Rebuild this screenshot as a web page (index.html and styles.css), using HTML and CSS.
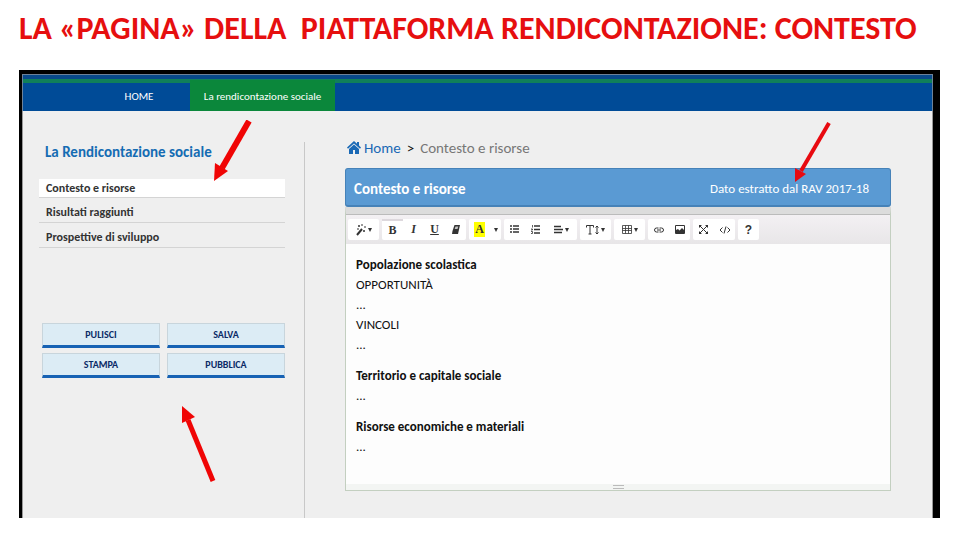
FILE: index.html
```html
<!DOCTYPE html>
<html lang="it">
  <head>
    <meta charset="utf-8">
    <title>La rendicontazione sociale</title>
    <meta name="viewport" content="width=device-width, initial-scale=1">
    <link rel="stylesheet" href="styles.css">
  </head>
  <body>
    <h1 class="title">LA «PAGINA» DELLA&nbsp; PIATTAFORMA RENDICONTAZIONE: CONTESTO</h1>
    <div class="frame">
      <header>
        <nav class="nav">
          <a href="#" class="nav-link">HOME</a>
          <a href="#" class="nav-link active">La rendicontazione sociale</a>
        </nav>
      </header>
      <div class="content">
        <aside class="sidebar">
          <h2 class="sidebar-title">La Rendicontazione sociale</h2>
          <ul class="menu">
            <li><a href="#" class="menu-link active">Contesto e risorse</a></li>
            <li><a href="#" class="menu-link">Risultati raggiunti</a></li>
            <li><a href="#" class="menu-link">Prospettive di sviluppo</a></li>
          </ul>
          <div class="actions">
            <button type="button" class="action">PULISCI</button>
            <button type="button" class="action">SALVA</button>
            <button type="button" class="action">STAMPA</button>
            <button type="button" class="action">PUBBLICA</button>
          </div>
        </aside>
        <main>
          <div class="breadcrumb">
            <a href="#" class="home-link">
              <svg width="14" height="13" viewBox="0 0 14 13"><path d="M7 0 0 6.500l1 1.200L7 2.500l6 5.200 1-1.200-2-1.900V1h-2v1.700zM2 8v5h4V9h2v4h4V8L7 3.600z" fill="currentColor"/></svg>
              Home
            </a>
            <span class="separator">&gt;</span>
            <span>Contesto e risorse</span>
          </div>
          <div class="panel-heading">
            <h3 class="panel-title">Contesto e risorse</h3>
            <span class="panel-note">Dato estratto dal RAV 2017-18</span>
          </div>
          <div class="editor">
            <div class="toolbar">
              <div class="group">
                <button type="button" class="tool wide" aria-label="Stile">
                  <svg width="10" height="12" viewBox="0 0 10 12"><path d="M1 11 6 5" stroke="currentColor" stroke-width="2"/><path d="M3 1v2M2 2h2M6 0v2M8 3h2M8 6v2M7 7h2M1 5h2" stroke="currentColor"/></svg>
                  <i class="caret"></i>
                </button>
              </div>
              <div class="group">
                <button type="button" class="tool pressed"><b>B</b></button>
                <button type="button" class="tool"><b><i>I</i></b></button>
                <button type="button" class="tool"><b><u>U</u></b></button>
                <button type="button" class="tool" aria-label="Rimuovi formato">
                  <svg width="8" height="9" viewBox="0 0 8 9"><path d="M2.500 0H8L6 9H0l.5-3z" fill="currentColor"/><path d="M3.500 1.500h2.800L5.500 4H2.700z" fill="#fff" opacity=".7"/></svg>
                </button>
              </div>
              <div class="group">
                <button type="button" class="tool"><b class="mark">A</b></button>
                <button type="button" class="tool narrow" aria-label="Altri colori"><i class="caret"></i></button>
              </div>
              <div class="group">
                <button type="button" class="tool" aria-label="Elenco puntato">
                  <svg width="9" height="9" viewBox="0 0 9 9"><path d="M0 1h2M0 4h2M0 7h2M3 1h6M3 4h6M3 7h6" stroke="currentColor" stroke-width="1.6"/></svg>
                </button>
                <button type="button" class="tool" aria-label="Elenco numerato">
                  <svg width="9" height="9" viewBox="0 0 9 9"><path d="M3 1h6M3 4.5h6M3 8h6" stroke="currentColor" stroke-width="1.4"/><path d="M1.5 0v2.5M0 4h1.5v1H0M0 6.500h1.500v2H0" fill="none" stroke="currentColor" stroke-width=".8"/></svg>
                </button>
                <button type="button" class="tool wide" aria-label="Paragrafo">
                  <svg width="9" height="9" viewBox="0 0 9 9"><path d="M0 1.500h7M0 4.500h9M0 7.500h8" stroke="currentColor" stroke-width="1.500"/></svg>
                  <i class="caret"></i>
                </button>
              </div>
              <div class="group">
                <button type="button" class="tool wide" aria-label="Altezza riga">
                  <svg width="13" height="10" viewBox="0 0 13 10"><path d="M.5 2.500v-2h7v2M4 .5v8.500M2.500 9h3M11 1v8M9.500 2.500 11 1l1.500 1.500M9.500 7.500 11 9l1.500-1.500" fill="none" stroke="currentColor"/></svg>
                  <i class="caret"></i>
                </button>
              </div>
              <div class="group">
                <button type="button" class="tool wide" aria-label="Tabella">
                  <svg width="10" height="9" viewBox="0 0 10 9"><path d="M.5.5h9v8h-9zM.5 3.500h9M.5 5.500h9M3.500.5v8M6.500.5v8" fill="none" stroke="currentColor" stroke-width=".8"/></svg>
                  <i class="caret"></i>
                </button>
              </div>
              <div class="group">
                <button type="button" class="tool" aria-label="Collegamento">
                  <svg width="10" height="6" viewBox="0 0 10 6"><path d="M4.500 5H2.500a2 2 0 0 1 0-4h2M5.500 1h2a2 2 0 0 1 0 4h-2M3 3h4" fill="none" stroke="currentColor"/></svg>
                </button>
                <button type="button" class="tool" aria-label="Immagine">
                  <svg width="10" height="9" viewBox="0 0 10 9"><path d="M.5.5h9v8h-9z" fill="none" stroke="currentColor"/><path d="M1 8V5l2-1 1.500 1.500L7 3l2 2v3z" fill="currentColor"/></svg>
                </button>
              </div>
              <div class="group">
                <button type="button" class="tool" aria-label="Schermo intero">
                  <svg width="9" height="9" viewBox="0 0 9 9"><path d="M1 1l7 7M8 1 1 8" stroke="currentColor"/><path d="M0 0h3L0 3zM9 0v3L6 0zM0 9V6l3 3zM9 9H6l3-3z" fill="currentColor"/></svg>
                </button>
                <button type="button" class="tool" aria-label="Codice">
                  <svg width="12" height="8" viewBox="0 0 12 8"><path d="M3.500 1.500 1 4l2.500 2.500M8.500 1.500 11 4 8.500 6.500M7 .5l-2 7" fill="none" stroke="currentColor"/></svg>
                </button>
              </div>
              <div class="group">
                <button type="button" class="tool help">?</button>
              </div>
            </div>
            <div class="text" contenteditable="true" role="textbox" aria-label="Contesto e risorse">
              <h4>Popolazione scolastica</h4>
              <p>OPPORTUNITÀ</p>
              <p>...</p>
              <p>VINCOLI</p>
              <p>...</p>
              <h4>Territorio e capitale sociale</h4>
              <p>...</p>
              <h4>Risorse economiche e materiali</h4>
              <p>...</p>
            </div>
            <div class="resize"><div class="grip"></div></div>
          </div>
        </main>
      </div>
      <!-- arrows over the page -->
      <svg class="arrow arrow-menu" width="40" height="62" viewBox="0 0 40 62"><path d="M36 1 9 48" stroke="#f00505" stroke-width="6"/><path d="M1 61 2 43l13 8z" fill="#f00505"/></svg>
      <svg class="arrow arrow-note" width="38" height="60" viewBox="0 0 38 60"><path d="M35 1 7 49" stroke="#e80a10" stroke-width="4"/><path d="M1 60V46l11 6z" fill="#e80a10"/></svg>
      <svg class="arrow arrow-actions" width="36" height="76" viewBox="0 0 36 76"><path d="M32 75 7 14" stroke="#f00505" stroke-width="5"/><path d="M1 0v17l13-6z" fill="#f00505"/></svg>
    </div>
  </body>
</html>
```
FILE: styles.css
```css
html {
  box-sizing: border-box;
  background-color: #fff;
}

*, *:before, *:after {
  box-sizing: inherit;
}

body {
  display: flex;
  flex-direction: column;
  margin: 0;
  padding: 0 20px 22px 19px;
  min-height: 100vh;
  font-family: Carlito, Calibri, Lato, sans-serif;
  font-size: 13px;
  color: #222;
}

h1, h2, h3, h4, p, ul {
  margin: 0;
  padding: 0;
}

a {
  color: inherit;
  text-decoration: none;
}

button {
  font: inherit;
  color: inherit;
  border: 0;
  padding: 0;
}

svg {
  display: block;
}

.title {
  height: 70px;
  line-height: 58px;
  font-size: 32px;
  color: #e60f0f;
  white-space: nowrap;
}

.frame {
  position: relative;
  display: flex;
  flex-direction: column;
  flex: 1;
  border: solid #000;
  border-width: 4px 7px 0 3px;
  background-color: #efefef;
}

header {
  border: 1px solid #6d8299;
  border-bottom: 0;
  background: linear-gradient(to bottom, #08498a 4px, #10805a 4px, #10805a 8px, #004b97 8px);
}

.nav {
  display: flex;
  height: 36px;
  padding: 5px 0 0 65px;
}

.nav-link {
  display: flex;
  align-items: center;
  justify-content: center;
  width: 145px;
  padding-top: 2px;
  font-size: 11px;
  color: #fff;
}

.nav-link:first-child {
  width: 102px;
}

.nav-link.active {
  background-color: #0b873b;
}

.content {
  display: flex;
  flex: 1;
  border: solid #999;
  border-width: 0 1px;
  padding: 31px 41px 0 16px;
}

.sidebar {
  flex: 0 0 266px;
  padding-right: 19px;
  border-right: 1px solid #c8c8c8;
}

.sidebar-title {
  padding-left: 6px;
  line-height: 20px;
  font-size: 15px;
  color: #156cb3;
}

.menu {
  margin-top: 17px;
  list-style: none;
}

.menu-link {
  display: block;
  padding: 5px 7px 1px;
  border-bottom: 1px solid #d4d4d4;
  line-height: 18px;
  font-size: 12px;
  font-weight: bold;
  color: #333;
}

.menu-link.active {
  background-color: #fff;
  padding-top: 0;
  padding-bottom: 0;
}

.actions {
  display: grid;
  grid-template-columns: 1fr 1fr;
  gap: 5px 7px;
  margin: 75px 0 0 3px;
}

.action {
  height: 25px;
  border: 1px solid #c8d5dc;
  border-bottom: 3px solid #1762b4;
  background-color: #dcecf5;
  font-size: 10px;
  font-weight: bold;
  color: #0a2a66;
}

main {
  flex: 1;
  min-width: 0;
  padding: 0 0 27px 40px;
}

.breadcrumb {
  display: flex;
  align-items: center;
  gap: 6px;
  height: 11px;
  padding-left: 2px;
  font-size: 15px;
  color: #777;
}

.home-link {
  display: flex;
  align-items: center;
  gap: 3px;
  color: #1a69b5;
}

.separator {
  color: #111;
}

.panel-heading {
  display: flex;
  align-items: center;
  justify-content: space-between;
  height: 39px;
  margin-top: 15px;
  padding: 3px 21px 0 8px;
  border: 1px solid #4682b8;
  border-bottom-width: 2px;
  border-radius: 3px;
  background-color: #5a9ad3;
  color: #fff;
}

.panel-title {
  font-size: 15px;
}

.panel-note {
  font-size: 13px;
}

.editor {
  border: 1px solid #c3cfc0;
  border-top: 7px solid #dcdcdc;
  background-color: #fdfdfd;
}

.toolbar {
  display: flex;
  flex-wrap: wrap;
  gap: 3px;
  padding: 4px 2px;
  border-top: 1px solid #bbb;
  background: linear-gradient(to bottom, #f3f0f3, #e8e6e8);
}

.group {
  display: flex;
  height: 21px;
  border-radius: 2px;
  background-color: #fff;
}

.tool {
  display: flex;
  align-items: center;
  justify-content: center;
  gap: 2px;
  width: 21px;
  background: none;
  font-family: "Liberation Serif", serif;
  font-size: 12px;
  color: #333;
}

.tool.wide {
  width: 31px;
}

.tool.narrow {
  width: 11px;
}

.tool.pressed {
  border-top: 2px solid #ddd8dd;
}

.tool.help {
  font-family: "Liberation Sans", sans-serif;
  font-weight: bold;
}

.mark {
  padding: 0 1px;
  background-color: #ff0;
}

.caret {
  border: solid transparent;
  border-width: 4px 2px 0;
  border-top-color: #333;
}

.text {
  min-height: 240px;
  padding: 11px 10px;
  line-height: 20px;
  color: #111;
  outline: 0;
}

.text h4 {
  font-size: 13px;
}

.text p + h4 {
  margin-top: 11px;
}

.resize {
  display: flex;
  justify-content: center;
  height: 6px;
  padding-top: 1px;
  background-color: #f3f5f3;
}

.grip {
  width: 11px;
  height: 4px;
  border: solid #bbb;
  border-width: 1px 0;
}

.arrow {
  position: absolute;
}

.arrow-menu {
  left: 191px;
  top: 46px;
}

.arrow-note {
  right: 101px;
  top: 48px;
}

.arrow-actions {
  left: 159px;
  top: 332px;
}
```
